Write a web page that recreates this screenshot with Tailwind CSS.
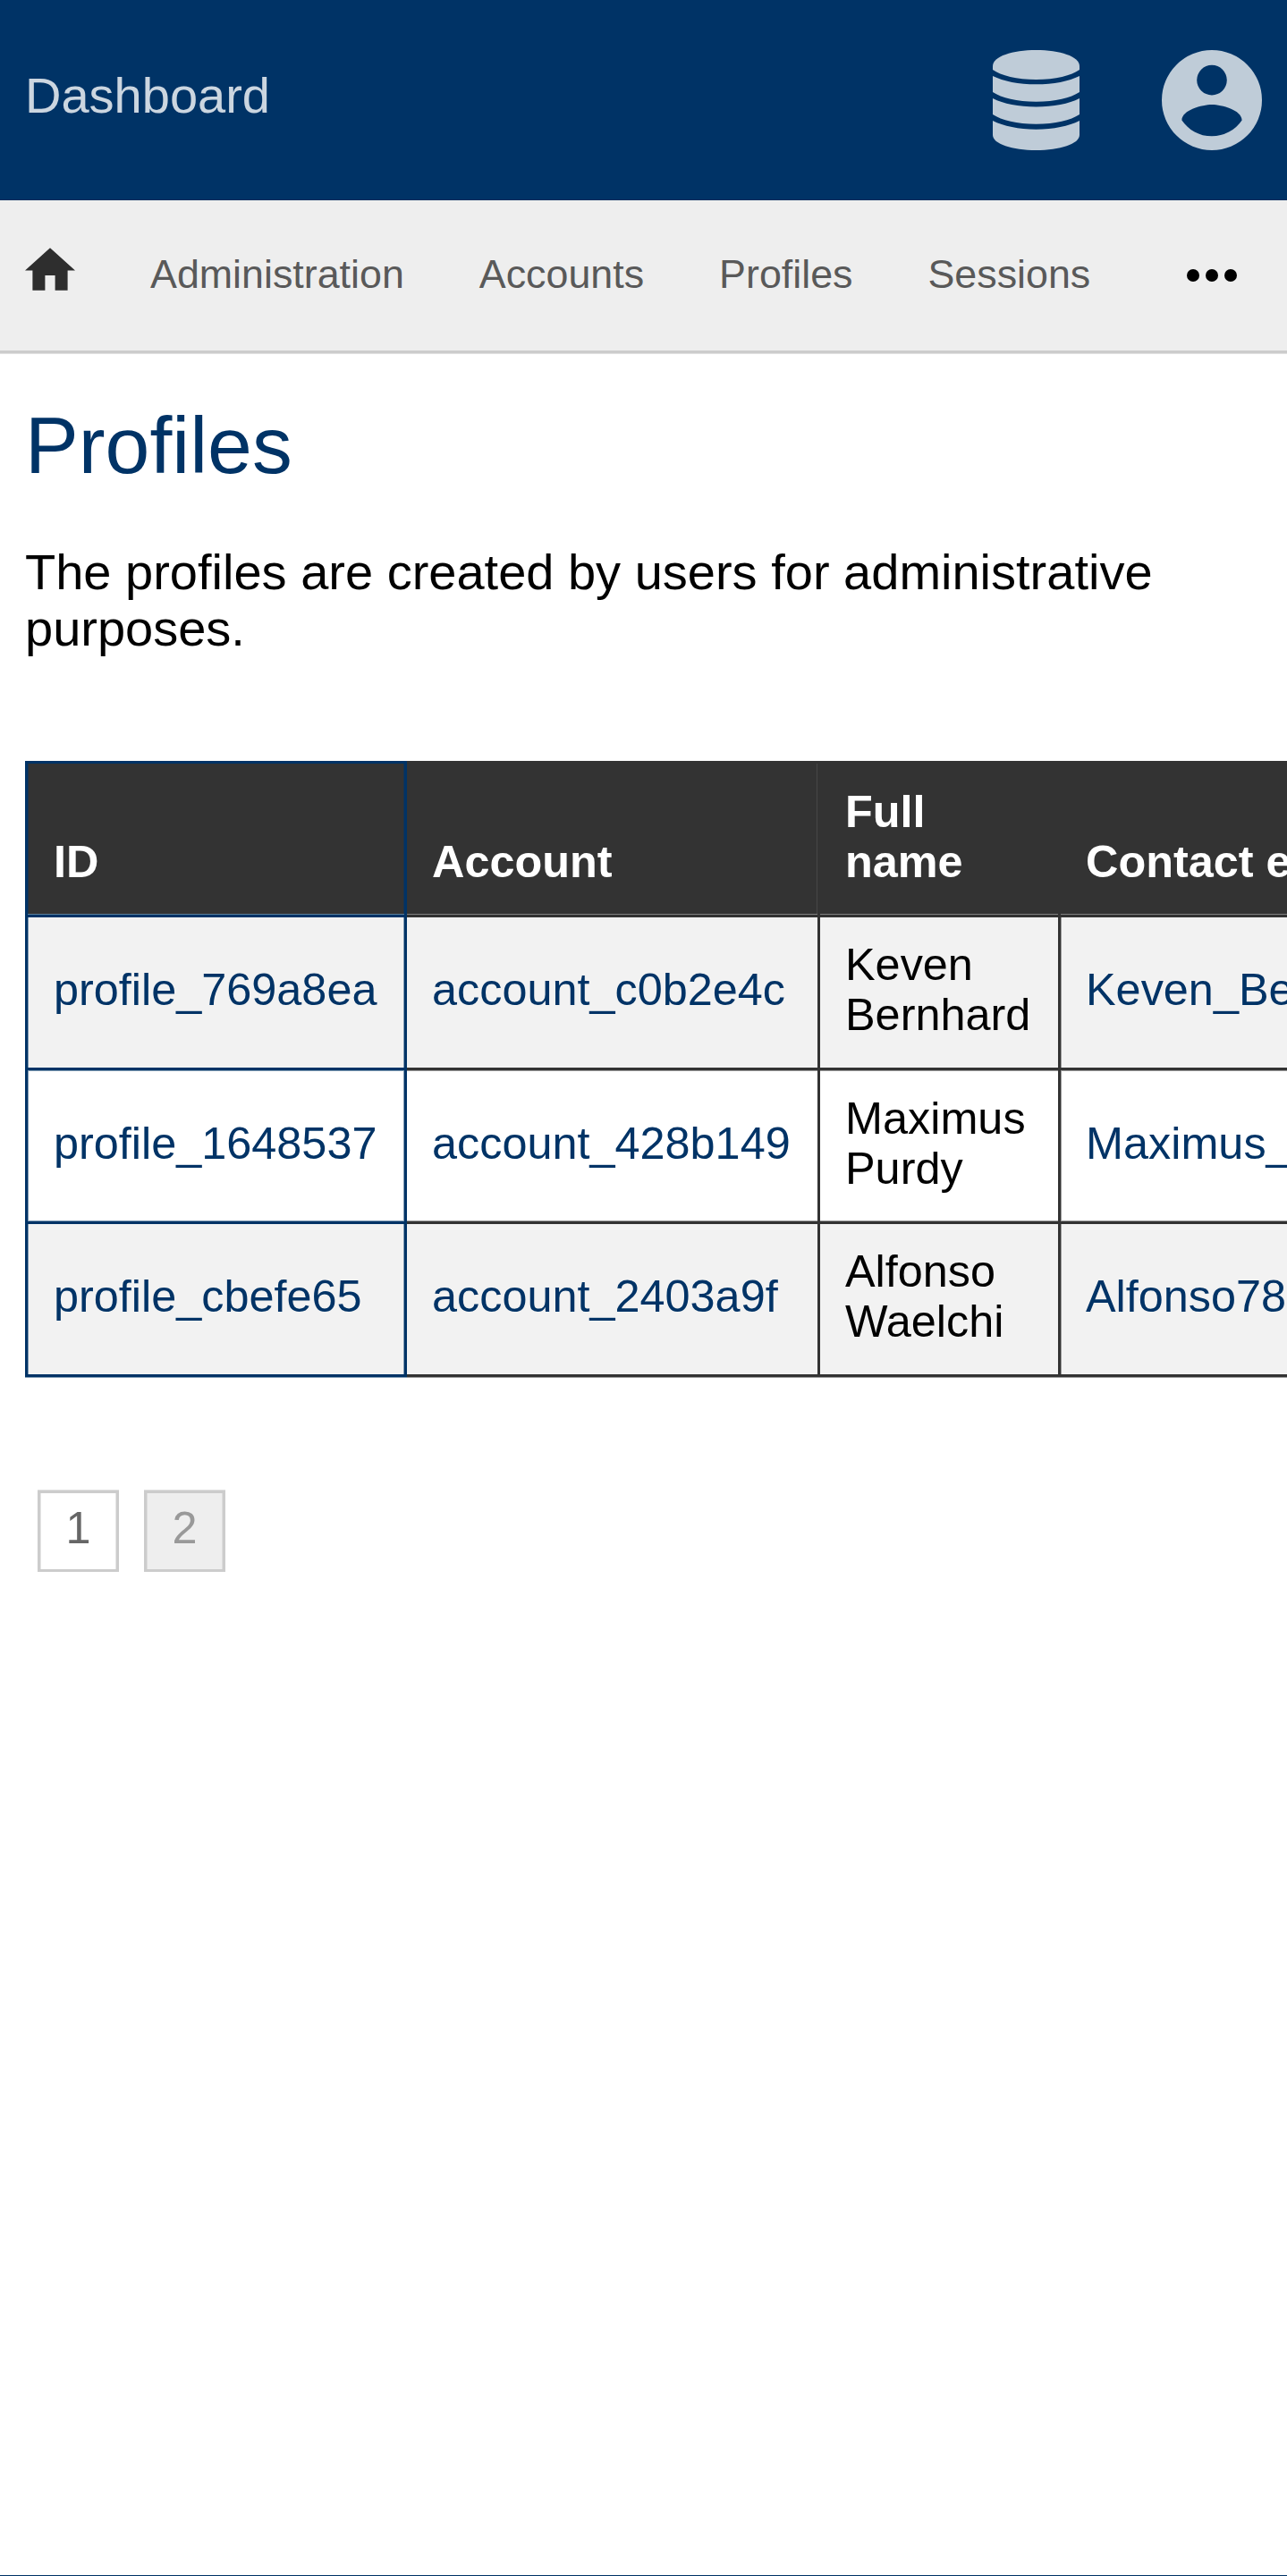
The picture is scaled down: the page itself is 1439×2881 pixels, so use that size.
<!DOCTYPE html>
<html lang="en">
<head>
<meta charset="utf-8">
<title>Profiles</title>
<script src="https://cdn.jsdelivr.net/npm/@tailwindcss/browser@4"></script>
</head>
<body class="flex h-[2881px] flex-col overflow-hidden border-b border-[#003366] bg-white font-['Liberation_Sans',Arial,sans-serif] text-black">
  <header class="flex h-[224px] shrink-0 items-center justify-between border-b border-[#002b5c] bg-[#003366] pr-[28.5px] pl-7">
    <a class="-mt-2.5 text-[56px] leading-[64px] text-white/80">Dashboard</a>
    <div class="flex items-center gap-[91.5px]">
      <svg class="h-28 w-[97px] text-[#bfccd8]" viewBox="0 0 97 112" fill="currentColor">
        <path d="M0 18C0 7 22 0 48.500 0S97 7 97 18V22C88 28.500 70 33 48.500 33S9 28.500 0 22Z"/>
        <path d="M0 29C12 35 29 38.300 48.500 38.300S85 35 97 29V47C87 53.500 70 57.700 48.500 57.700S10 53.500 0 47Z"/>
        <path d="M0 54C12 60 29 63.500 48.500 63.500S85 60 97 54V72C87 78.500 70 82.700 48.500 82.700S10 78.500 0 72Z"/>
        <path d="M0 79C12 85 29 88.700 48.500 88.700S85 85 97 79V95C97 105 75 112 48.500 112S0 105 0 95Z"/>
      </svg>
      <svg class="size-28 text-[#bfccd8]" viewBox="2 2 20 20" fill="currentColor">
        <path d="M12 19.200c-2.500 0-4.710-1.280-6-3.200.03-2 4-3.100 6-3.100s5.970 1.100 6 3.100a7.230 7.230 0 0 1-6 3.200M12 5a3 3 0 0 1 3 3 3 3 0 0 1-3 3 3 3 0 0 1-3-3 3 3 0 0 1 3-3m0-3A10 10 0 0 0 2 12a10 10 0 0 0 10 10 10 10 0 0 0 10-10A10 10 0 0 0 12 2Z"/>
      </svg>
    </div>
  </header>

  <nav class="flex h-[171px] shrink-0 items-center border-b-[3px] border-[#ccc] bg-[#eee] px-7 text-[44.8px] leading-[50px] text-[#595959] shadow-[0_1px_#e0e0e0]">
    <div class="-mt-1 flex items-center gap-[84px]">
      <svg class="-mt-2.5 h-[48px] w-14 text-[#2e2e2e]" viewBox="2 3 20 17" fill="currentColor"><path d="M10 20v-6h4v6h5v-8h3L12 3 2 12h3v8z"/></svg>
      <a>Administration</a>
      <a>Accounts</a>
      <a>Profiles</a>
      <a>Sessions</a>
    </div>
    <svg class="mr-[28.5px] ml-auto h-3.5 w-14 text-black" viewBox="0 0 56 14" fill="currentColor"><circle cx="7" cy="7" r="7"/><circle cx="28" cy="7" r="7"/><circle cx="49" cy="7" r="7"/></svg>
  </nav>

  <main class="flex flex-col pl-7">
    <h1 class="mt-[53px] text-[89.6px] leading-[100px] text-[#003366]">Profiles</h1>
    <p class="mt-[60px] mr-7 text-[56px] leading-[63px]">The profiles are created by users for administrative purposes.</p>

    <div class="mt-[117px] h-[690px] overflow-hidden">
    <table class="w-[2000px] table-fixed border-separate border-spacing-0 text-left text-[50.4px] leading-[56px]">
      <colgroup><col class="w-[427px]"><col class="w-[459px]"><col class="w-[269px]"><col></colgroup>
      <thead>
        <tr class="h-[172px] bg-[#333] align-bottom font-bold text-white">
          <th class="border-x-[3px] border-t-[3px] border-[#003366] pb-[31px] pl-[29px] align-bottom shadow-[inset_0_-1px_#5f7f99,inset_1px_0_#1a334d,inset_-1px_0_#1a334d]">ID</th>
          <th class="border-t-[3px] border-[#333] px-7 pb-[31px] align-bottom shadow-[inset_0_-1px_#808080,inset_-1px_0_#474747]">Account</th>
          <th class="border-t-[3px] border-l-[3px] border-[#333] pb-[31px] pl-7 align-bottom shadow-[inset_0_-1px_#808080]">Full<br>name</th>
          <th class="border-t-[3px] border-l-[3px] border-[#333] px-7 pb-[31px] align-bottom shadow-[inset_0_-1px_#808080]">Contact email</th>
        </tr>
      </thead>
      <tbody class="text-[#003366]">
        <tr class="h-[171px] bg-[#f2f2f2]">
          <td class="border-x-[3px] border-t-[3px] border-[#003366] pb-[59px] pl-[29px] align-bottom shadow-[inset_1px_0_#7f99b2,inset_-1px_0_#7f99b2]">profile_769a8ea</td>
          <td class="border-t-[3px] border-[#333] px-7 pb-[59px] align-bottom">account_c0b2e4c</td>
          <td class="border-t-[3px] border-l-[3px] border-[#333] pb-[31px] pl-7 align-bottom text-black">Keven<br>Bernhard</td>
          <td class="border-t-[3px] border-l-[3px] border-[#333] px-7 pb-[59px] align-bottom shadow-[inset_1px_0_#999]">Keven_Bernhard@example.com</td>
        </tr>
        <tr class="h-[172px]">
          <td class="border-x-[3px] border-t-[3px] border-[#003366] pb-[59px] pl-[29px] align-bottom shadow-[inset_1px_0_#7f99b2,inset_-1px_0_#7f99b2,inset_0_1px_#7f99b2,inset_0_-1px_#7f99b2]">profile_1648537</td>
          <td class="border-t-[3px] border-[#333] px-7 pb-[59px] align-bottom shadow-[inset_0_1px_#999,inset_0_-1px_#999]">account_428b149</td>
          <td class="border-t-[3px] border-l-[3px] border-[#333] pb-[31px] pl-7 align-bottom text-black shadow-[inset_0_1px_#999,inset_0_-1px_#999]">Maximus<br>Purdy</td>
          <td class="border-t-[3px] border-l-[3px] border-[#333] px-7 pb-[59px] align-bottom shadow-[inset_1px_0_#999,inset_0_1px_#999,inset_0_-1px_#999]">Maximus_Purdy@example.com</td>
        </tr>
        <tr class="h-[174px] bg-[#f2f2f2]">
          <td class="border-[3px] border-[#003366] pb-[59px] pl-[29px] align-bottom shadow-[inset_1px_0_#7f99b2,inset_-1px_0_#7f99b2,0_1px_#7f99b2]">profile_cbefe65</td>
          <td class="border-y-[3px] border-[#333] px-7 pb-[59px] align-bottom shadow-[0_1px_#999]">account_2403a9f</td>
          <td class="border-y-[3px] border-l-[3px] border-[#333] pb-[31px] pl-7 align-bottom text-black shadow-[0_1px_#999]">Alfonso<br>Waelchi</td>
          <td class="border-y-[3px] border-l-[3px] border-[#333] px-7 pb-[59px] align-bottom shadow-[inset_1px_0_#999,0_1px_#999]">Alfonso78@example.com</td>
        </tr>
      </tbody>
    </table>
    </div>

    <div class="mt-[126px] ml-3.5 flex gap-7 text-center text-[50.4px] leading-[77px]">
      <a class="h-[91px] w-[91px] border-[3px] border-[#ccc] text-[#666] shadow-[0_-1px_#e0e0e0,inset_1px_0_#e5e5e5,inset_-1px_0_#e5e5e5]">1</a>
      <a class="h-[91px] w-[91px] border-[3px] border-[#ccc] bg-[#eee] text-[#999] shadow-[0_-1px_#e0e0e0,inset_1px_0_#ddd,inset_-1px_0_#ddd]">2</a>
    </div>
  </main>
</body>
</html>
